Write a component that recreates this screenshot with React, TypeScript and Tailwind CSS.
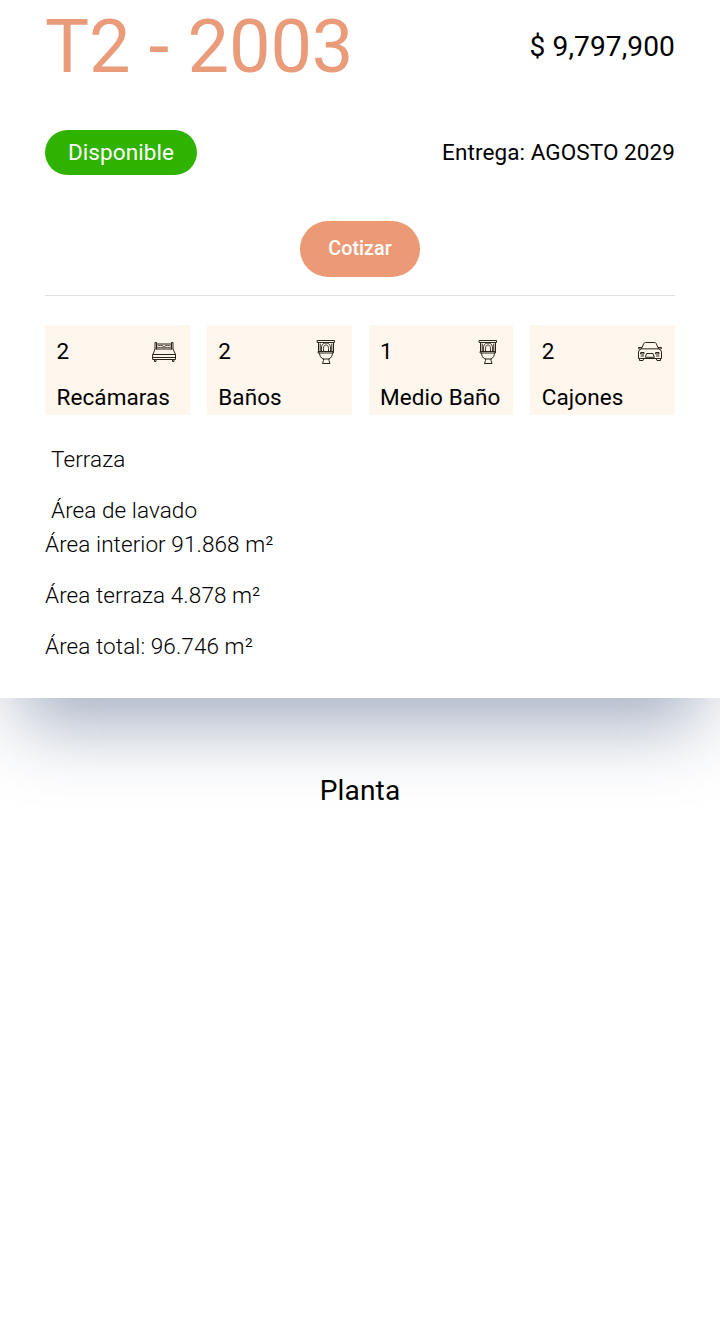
import type { ReactNode } from "react";

const iconProps = {
  fill: "none",
  stroke: "#2a231c",
  strokeWidth: 1,
  strokeLinejoin: "round" as const,
  strokeLinecap: "round" as const,
};

function BedIcon() {
  return (
    <svg width="26" height="26" viewBox="0 0 26 26" {...iconProps}>
      <path d="M4 10V3.500h1.500V10M20.500 10V3.500H22V10M5.500 5h15M5.500 10h15M4 10l-2 5.500M22 10l2.500 5.500M2 15.500h22.500v5H2zM2 18.500h22.500M3.500 20.500v2H5v-2M21.500 20.500v2H23v-2" />
      <path strokeWidth="0.8" d="M6.500 7c1.500-.8 4.500-.8 5.700 0 .4.700.4 1.200 0 1.800-1.500-.6-4.200-.6-5.700 0M19.500 7c-1.500-.8-4.500-.8-5.700 0-.4.700-.4 1.200 0 1.800 1.500-.6 4.200-.6 5.700 0" />
    </svg>
  );
}

function ToiletIcon() {
  return (
    <svg width="26" height="26" viewBox="0 0 26 26" {...iconProps}>
      <path d="M4.500 1.500h17v2h-17zM5.500 3.500v9M20.500 3.500v9M5.500 12.500h15V14h-15zM6.500 14c0 3 1.500 5 3.500 6h6c2-1 3.500-3 3.500-6M10.500 20v1.500l-1 3h7.500l-1-3V20" />
      <path d="M8.500 12.500c-.6-5.500.7-8.500 4.500-8.500s5.100 3 4.500 8.500M10.500 12c-.3-4 .4-6 2.500-6s2.800 2 2.500 6" />
      <path d="M7.200 5v6.500M18.800 5v6.500" />
    </svg>
  );
}

function CarIcon() {
  return (
    <svg width="26" height="26" viewBox="0 0 26 26" {...iconProps}>
      <path d="M4.500 9.500l2.300-5q.5-1 1.600-1h9.200q1.100 0 1.600 1l2.300 5zM4.500 8.500H1.500v1.200l2 .5M21.500 8.500h3v1.200l-2 .5M4.500 9.500Q1.500 11 1.500 13v6.500h23V13q0-2-3-3.500M2.500 19.500v2h3.500l.8-2M19.200 19.500l.8 2h3.500v-2" />
      <path d="M4 13.500h3v1.500H4zM19 13.500h3v1.500h-3zM10 14.500h6l1.300 3.800H8.700zM4 17h2.500M19.500 17H22" />
    </svg>
  );
}

function Feature({ count, label, icon }: { count: number; label: string; icon: ReactNode }) {
  return (
    <div className="flex h-[90px] flex-col justify-between bg-[#fff6ed] pt-[13px] pr-[12.5px] pb-[1px] pl-[11.5px] leading-[34px]">
      <div className="flex h-[27px] items-center justify-between">
        <span className="pb-[2px]">{count}</span>
        {icon}
      </div>
      <span className="whitespace-nowrap">{label}</span>
    </div>
  );
}

export default function App() {
  return (
    <div className="min-h-[1343px] overflow-hidden bg-white font-['Roboto',sans-serif] text-[22.5px] tracking-[0.08px] text-black">
      <section className="h-[698px] bg-white px-[45px] shadow-[0_46px_70px_-19px_rgba(18,44,92,0.38)]">
        <header className="flex h-[90px] items-center justify-between pt-[3px]">
          <h1 className="text-[74px] leading-[92px] tracking-[-0.1px] text-[#e99b7a]">T2 - 2003</h1>
          <p className="pt-px text-[28.1px] tracking-[0.1px]">$ 9,797,900</p>
        </header>
        <div className="mt-10 flex h-[45px] items-center justify-between">
          <span className="flex h-[45px] w-[152px] items-center justify-center rounded-full bg-[#30b200] text-white">
            Disponible
          </span>
          <p>Entrega: AGOSTO 2029</p>
        </div>
        <div className="mt-[46px] flex justify-center">
          <button className="h-14 w-[120px] rounded-full bg-[#ec9a76] text-[19.7px] font-medium tracking-[0.05px] text-white">
            Cotizar
          </button>
        </div>
        <hr className="mt-[18px] border-t border-[#e2e2e2]" />
        <div className="mt-[29px] grid grid-cols-4 gap-[17px]">
          <Feature count={2} label="Recámaras" icon={<BedIcon />} />
          <Feature count={2} label="Baños" icon={<ToiletIcon />} />
          <Feature count={1} label="Medio Baño" icon={<ToiletIcon />} />
          <Feature count={2} label="Cajones" icon={<CarIcon />} />
        </div>
        <div className="mt-[27px] leading-[34px] font-light">
          <p className="pl-1.5">Terraza</p>
          <p className="mt-[17px] pl-1.5">Área de lavado</p>
          <p>Área interior 91.868 m²</p>
          <p className="mt-[17px]">Área terraza 4.878 m²</p>
          <p className="mt-[17px]">Área total: 96.746 m²</p>
        </div>
      </section>
      <h2 className="relative mt-[76px] text-center text-[28.1px] leading-[34px] tracking-[0.14px]">Planta</h2>
    </div>
  );
}
